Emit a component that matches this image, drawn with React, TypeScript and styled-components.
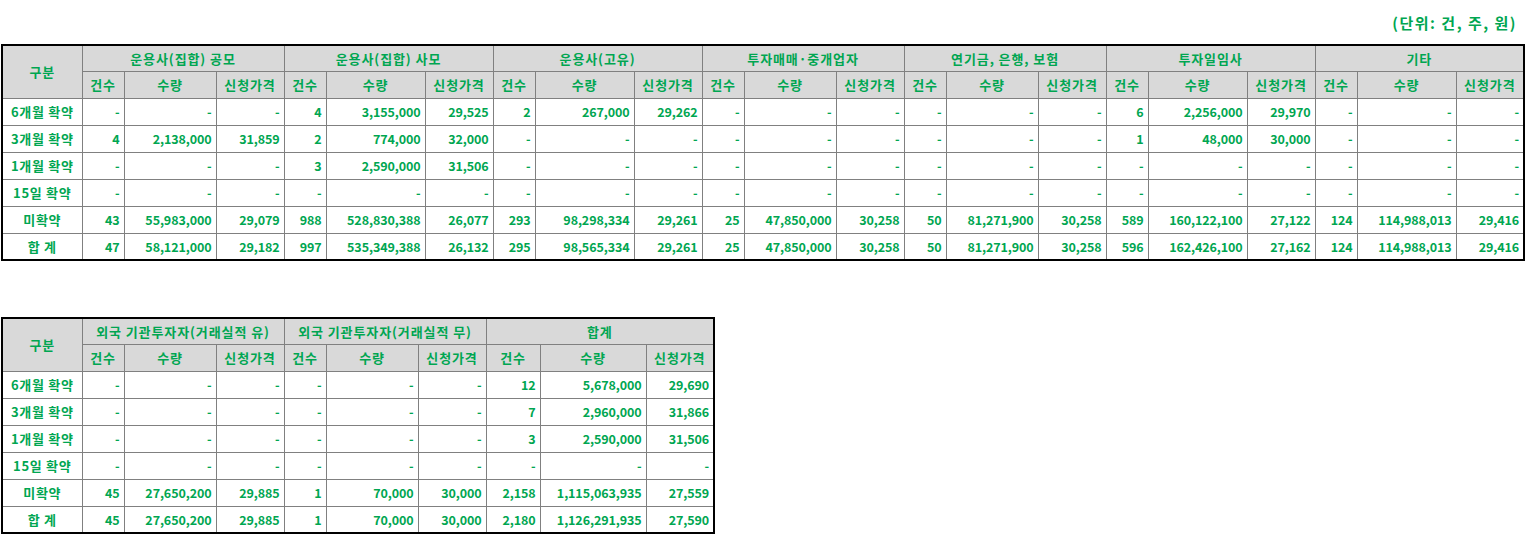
import styled, { createGlobalStyle } from 'styled-components';

const GlobalStyle = createGlobalStyle`
  html, body {
    margin: 0;
    padding: 0;
    background: #ffffff;
  }
  body {
    font-family: "Noto Sans CJK KR", "DejaVu Sans", sans-serif;
  }
`;

const Page = styled.div`
  width: 1525px;
  display: flex;
  flex-direction: column;
  gap: 56px;
`;

const Section = styled.div`
  display: flex;
  flex-direction: column;
`;

const UnitLine = styled.div`
  height: 44px;
  display: flex;
  align-items: center;
  justify-content: flex-end;
  padding-right: 8px;
  color: #00a651;
  font-size: 15px;
  font-weight: bold;
  letter-spacing: 1.5px;
`;

const Table = styled.table<{ $width: number }>`
  width: ${(p) => p.$width}px;
  margin-left: 1px;
  table-layout: fixed;
  border-collapse: collapse;
  border: 2px solid #000000;
  color: #00a651;
  font-size: 13px;
  font-weight: bold;
  line-height: 16px;
`;

const HeadCell = styled.th<{ $top?: boolean }>`
  height: ${(p) => (p.$top ? 25 : 26)}px;
  padding: 0;
  background: #d9d9d9;
  border: 1px solid #808080;
  text-align: center;
  font-weight: bold;
  white-space: nowrap;
  letter-spacing: 0.9px;
`;

const LabelCell = styled.td<{ $last?: boolean }>`
  height: ${(p) => (p.$last ? 25 : 26)}px;
  padding: 0;
  border: 1px solid #808080;
  text-align: center;
  white-space: nowrap;
  letter-spacing: 0.7px;
`;

const NumCell = styled.td`
  padding: 0 4px 0 0;
  border: 1px solid #808080;
  text-align: right;
  white-space: nowrap;
  font-size: 12.5px;
  letter-spacing: -0.1px;
`;

type Group = { title: string; widths: [number, number, number]; rows: string[][] };

const rowLabels = ['6개월 확약', '3개월 확약', '1개월 확약', '15일 확약', '미확약', '합 계'];
const dash = ['-', '-', '-'];

const topGroups: Group[] = [
  {
    title: '운용사(집합) 공모',
    widths: [42, 92, 68],
    rows: [dash, ['4', '2,138,000', '31,859'], dash, dash, ['43', '55,983,000', '29,079'], ['47', '58,121,000', '29,182']],
  },
  {
    title: '운용사(집합) 사모',
    widths: [42, 99, 68],
    rows: [
      ['4', '3,155,000', '29,525'],
      ['2', '774,000', '32,000'],
      ['3', '2,590,000', '31,506'],
      dash,
      ['988', '528,830,388', '26,077'],
      ['997', '535,349,388', '26,132'],
    ],
  },
  {
    title: '운용사(고유)',
    widths: [42, 99, 68],
    rows: [['2', '267,000', '29,262'], dash, dash, dash, ['293', '98,298,334', '29,261'], ['295', '98,565,334', '29,261']],
  },
  {
    title: '투자매매·중개업자',
    widths: [42, 92, 68],
    rows: [dash, dash, dash, dash, ['25', '47,850,000', '30,258'], ['25', '47,850,000', '30,258']],
  },
  {
    title: '연기금, 은행, 보험',
    widths: [42, 92, 68],
    rows: [dash, dash, dash, dash, ['50', '81,271,900', '30,258'], ['50', '81,271,900', '30,258']],
  },
  {
    title: '투자일임사',
    widths: [42, 99, 68],
    rows: [
      ['6', '2,256,000', '29,970'],
      ['1', '48,000', '30,000'],
      dash,
      dash,
      ['589', '160,122,100', '27,122'],
      ['596', '162,426,100', '27,162'],
    ],
  },
  {
    title: '기타',
    widths: [42, 99, 68],
    rows: [dash, dash, dash, dash, ['124', '114,988,013', '29,416'], ['124', '114,988,013', '29,416']],
  },
];

const bottomGroups: Group[] = [
  {
    title: '외국 기관투자자(거래실적 유)',
    widths: [42, 92, 68],
    rows: [dash, dash, dash, dash, ['45', '27,650,200', '29,885'], ['45', '27,650,200', '29,885']],
  },
  {
    title: '외국 기관투자자(거래실적 무)',
    widths: [42, 92, 68],
    rows: [dash, dash, dash, dash, ['1', '70,000', '30,000'], ['1', '70,000', '30,000']],
  },
  {
    title: '합계',
    widths: [54, 106, 68],
    rows: [
      ['12', '5,678,000', '29,690'],
      ['7', '2,960,000', '31,866'],
      ['3', '2,590,000', '31,506'],
      dash,
      ['2,158', '1,115,063,935', '27,559'],
      ['2,180', '1,126,291,935', '27,590'],
    ],
  },
];

const DataTable = ({ groups }: { groups: Group[] }) => {
  const width = 80 + groups.reduce((s, g) => s + g.widths[0] + g.widths[1] + g.widths[2], 0);
  return (
    <Table $width={width}>
      <colgroup>
        <col style={{ width: 80 }} />
        {groups.flatMap((g, gi) => g.widths.map((w, i) => <col key={`${gi}-${i}`} style={{ width: w }} />))}
      </colgroup>
      <thead>
        <tr>
          <HeadCell rowSpan={2}>구분</HeadCell>
          {groups.map((g) => (
            <HeadCell key={g.title} colSpan={3} $top>
              {g.title}
            </HeadCell>
          ))}
        </tr>
        <tr>
          {groups.flatMap((g) => [
            <HeadCell key={`${g.title}-a`}>건수</HeadCell>,
            <HeadCell key={`${g.title}-b`}>수량</HeadCell>,
            <HeadCell key={`${g.title}-c`}>신청가격</HeadCell>,
          ])}
        </tr>
      </thead>
      <tbody>
        {rowLabels.map((label, ri) => (
          <tr key={label}>
            <LabelCell $last={ri === rowLabels.length - 1}>{label}</LabelCell>
            {groups.flatMap((g) =>
              g.rows[ri].map((v, ci) => <NumCell key={`${g.title}-${ci}`}>{v}</NumCell>)
            )}
          </tr>
        ))}
      </tbody>
    </Table>
  );
};

const App = () => (
  <>
    <GlobalStyle />
    <Page>
      <Section>
        <UnitLine>(단위: 건, 주, 원)</UnitLine>
        <DataTable groups={topGroups} />
      </Section>
      <DataTable groups={bottomGroups} />
    </Page>
  </>
);

export default App;
